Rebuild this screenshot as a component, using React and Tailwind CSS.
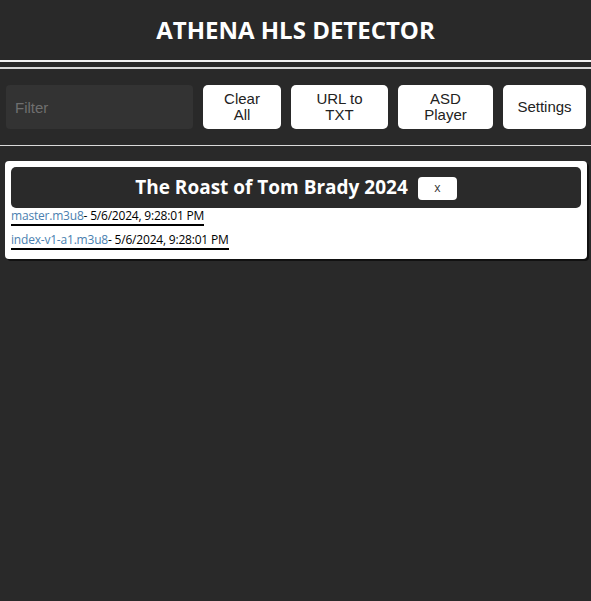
export default function App() {
  const rows = [
    { name: "master.m3u8", date: "- 5/6/2024, 9:28:01 PM" },
    { name: "index-v1-a1.m3u8", date: "- 5/6/2024, 9:28:01 PM" },
  ];
  return (
    <div className="min-h-[601px] w-full bg-[#292929]">
      <div className="flex h-[60px] items-center justify-center">
        <h1 className="font-['Open_Sans',sans-serif] text-[24px] font-bold text-white">
          ATHENA HLS DETECTOR
        </h1>
      </div>
      <div className="h-[2px] bg-[#f2f2f2]" />
      <div className="h-[5px]" />
      <div className="h-[2px] bg-[#d9d9d9]" />
      <div className="flex items-center gap-[10px] pl-[6px] pt-[16px] pb-[16px] font-['Liberation_Sans',Arial,sans-serif]">
        <input
          placeholder="Filter"
          className="h-[44px] w-[187px] shrink-0 rounded-[4px] bg-[#333333] px-[9px] text-[15px] text-white outline-none placeholder:text-[#6f6f6f]"
        />
        <button className="h-[44px] w-[78px] shrink-0 rounded-[5px] bg-white text-[15px] leading-[16px] text-[#222]">
          Clear<br />All
        </button>
        <button className="h-[44px] w-[97px] shrink-0 rounded-[5px] bg-white text-[15px] leading-[16px] text-[#222]">
          URL to<br />TXT
        </button>
        <button className="h-[44px] w-[95px] shrink-0 rounded-[5px] bg-white text-[15px] leading-[16px] text-[#222]">
          ASD<br />Player
        </button>
        <button className="h-[44px] w-[83px] shrink-0 rounded-[5px] bg-white text-[15px] leading-[16px] text-[#222]">
          Settings
        </button>
      </div>
      <div className="h-[1px] bg-[#d9d9d9]" />
      <div className="px-[5px] pt-[15px]">
        <div className="w-[582px] rounded-[4px] bg-white px-[6px] pt-[6px] pb-[9px] shadow-[2px_2px_0_#111]">
          <div className="flex h-[41px] items-center justify-center gap-[10px] rounded-[5px] bg-[#2a2a2a]">
            <span className="font-['Open_Sans',sans-serif] text-[19px] font-bold text-white">
              The Roast of Tom Brady 2024
            </span>
            <button className="mt-[1px] h-[23px] w-[39px] rounded-[4px] bg-white font-['Open_Sans',sans-serif] text-[12px] text-[#333]">
              x
            </button>
          </div>
          <div className="font-['Open_Sans',sans-serif] text-[12px] leading-[14px] tracking-[-0.2px]">
            {rows.map((r, i) => (
              <div key={r.name} className={i === 0 ? "pt-[1px]" : "pt-[7px]"}>
                <span className="inline-block border-b-2 border-black pb-[1px]">
                  <span className="text-[#4a7fb0]">{r.name}</span>
                  <span className="text-black">{r.date}</span>
                </span>
              </div>
            ))}
          </div>
        </div>
      </div>
    </div>
  );
}
